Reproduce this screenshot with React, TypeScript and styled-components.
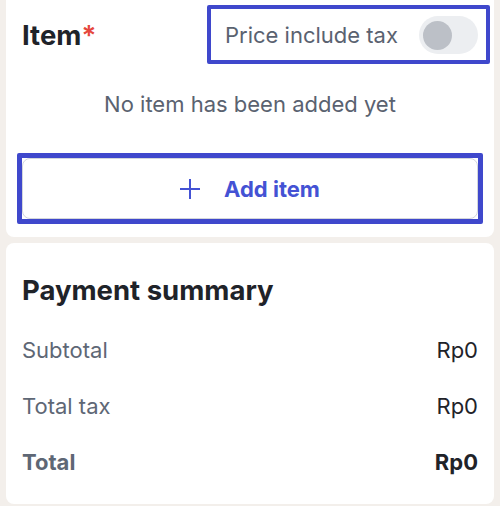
import React from 'react'
import styled, { createGlobalStyle } from 'styled-components'

const GlobalStyle = createGlobalStyle`
  body {
    margin: 0;
    background-color: #f3efeb;
    font-family: Inter, "Noto Sans", sans-serif;
  }
`

const Page = styled.div`
  display: flex;
  flex-direction: column;
  gap: 6px;
  padding: 0 6px;
  width: 500px;
  height: 506px;
  box-sizing: border-box;
  overflow: hidden;
`

const Card = styled.section`
  background-color: #fff;
  border-radius: 8px;
  padding: 0 16px;
`

const ItemCard = styled(Card)`
  margin-top: -8px;
  padding-top: 13px;
  padding-bottom: 13px;
`

const SummaryCard = styled(Card)`
  padding-top: 29px;
  padding-bottom: 14px;
`

const Header = styled.div`
  display: flex;
  align-items: center;
  justify-content: space-between;
`

const Title = styled.h2`
  margin: 0;
  font-size: 27.5px;
  font-weight: 700;
  color: #1f2329;
  line-height: 36px;
`

const Required = styled.span`
  color: #e5473c;
  font-weight: 600;
`

const Highlight = styled.div`
  border: 4px solid #3f48cc;
  border-radius: 2px;
`

const ToggleBox = styled(Highlight)`
  display: flex;
  align-items: center;
  gap: 21px;
  padding: 7px 8px 6px 14px;
  margin-right: -12px;
`

const ToggleLabel = styled.span`
  font-size: 22px;
  color: #5a6270;
`

const Track = styled.span`
  display: flex;
  align-items: center;
  width: 59px;
  height: 38px;
  padding: 0 4px;
  box-sizing: border-box;
  border-radius: 19px;
  background-color: #eceef1;
`

const Knob = styled.span`
  width: 29px;
  height: 29px;
  border-radius: 50%;
  background-color: #bcc0c7;
`

const Empty = styled.p`
  margin: 26px 0 35px;
  text-align: center;
  font-size: 22px;
  color: #5a6270;
  line-height: 28px;
`

const ButtonFrame = styled(Highlight)`
  margin: 0 -5px;
  border-width: 5px;
`

const AddButton = styled.button`
  display: flex;
  align-items: center;
  justify-content: center;
  gap: 24px;
  width: 100%;
  height: 61px;
  border: 1px solid #d3d6db;
  border-radius: 8px;
  background-color: #fff;
  color: #4452d4;
  font-family: Inter, sans-serif;
  font-size: 22px;
  font-weight: 700;
  cursor: pointer;
`

const SummaryTitle = styled.h3`
  margin: 0 0 14px;
  font-size: 27.5px;
  font-weight: 700;
  color: #1f2329;
  line-height: 36px;
`

const Row = styled.div`
  display: flex;
  align-items: center;
  justify-content: space-between;
  height: 56px;
  font-size: 22px;
  font-weight: ${({ $strong }: { $strong?: boolean }) => ($strong ? 700 : 400)};
`

const Label = styled.span`
  color: #5e6775;
`

const Value = styled.span`
  color: #1f2329;
`

const PlusIcon = () => (
  <svg width="20" height="20" viewBox="0 0 20 20" fill="none" stroke="currentColor" strokeWidth="2">
    <path d="M10 0v20M0 10h20" />
  </svg>
)

const rows = [
  { label: 'Subtotal', value: 'Rp0' },
  { label: 'Total tax', value: 'Rp0' },
  { label: 'Total', value: 'Rp0', strong: true },
]

export default function App() {
  return (
    <>
      <GlobalStyle />
      <Page>
        <ItemCard>
          <Header>
            <Title>
              Item<Required>*</Required>
            </Title>
            <ToggleBox>
              <ToggleLabel>Price include tax</ToggleLabel>
              <Track>
                <Knob />
              </Track>
            </ToggleBox>
          </Header>
          <Empty>No item has been added yet</Empty>
          <ButtonFrame>
            <AddButton>
              <PlusIcon />
              Add item
            </AddButton>
          </ButtonFrame>
        </ItemCard>
        <SummaryCard>
          <SummaryTitle>Payment summary</SummaryTitle>
          {rows.map((r) => (
            <Row key={r.label} $strong={r.strong}>
              <Label>{r.label}</Label>
              <Value>{r.value}</Value>
            </Row>
          ))}
        </SummaryCard>
      </Page>
    </>
  )
}
